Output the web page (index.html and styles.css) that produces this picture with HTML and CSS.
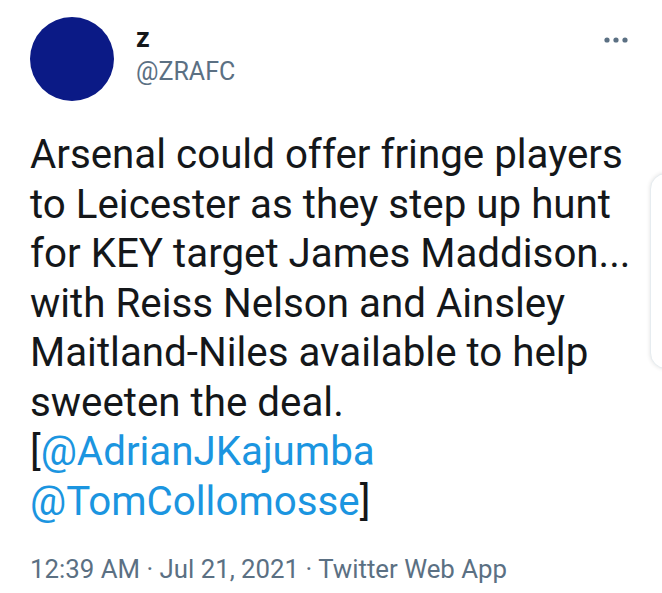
FILE: index.html
```html
<!DOCTYPE html>
<html lang="en">
<head>
    <meta charset="UTF-8">
    <meta name="viewport" content="width=device-width, initial-scale=1.0">
    <title>z on Twitter</title>
    <link rel="stylesheet" href="styles.css">
</head>
<body>

    <div class="tweet">
        <div class="tweet-head">
            <div class="avatar"></div>
            <div class="author">
                <div class="name">z</div>
                <div class="handle">@ZRAFC</div>
            </div>
            <svg class="more" width="24" height="6" viewBox="0 0 24 6">
                <circle cx="3" cy="3" r="2.6" />
                <circle cx="12" cy="3" r="2.6" />
                <circle cx="21" cy="3" r="2.6" />
            </svg>
        </div>

        <p class="tweet-text">Arsenal could offer fringe players to Leicester as they step up hunt for KEY target James Maddison... with Reiss Nelson and Ainsley Maitland-Niles available to help sweeten the deal. [<a href="#">@AdrianJKajumba</a> <a href="#">@TomCollomosse</a>]</p>

        <div class="meta">12:39 AM · Jul 21, 2021 · Twitter Web App</div>
    </div>

    <!-- edge of the next card peeking in -->
    <div class="side-card"></div>

</body>
</html>
```

FILE: styles.css
```css
body {
    margin: 0;
    background-color: #ffffff;
    font-family: Roboto, "Noto Sans", sans-serif;
    color: #14171a;
    overflow: hidden;
}

.tweet {
    padding: 17px 20px 0 30px;
}

.tweet-head {
    display: flex;
    align-items: flex-start;
}

.avatar {
    width: 84px;
    height: 84px;
    border-radius: 50%;
    background-color: #0b1a86;
    flex-shrink: 0;
}

.author {
    margin-left: 22px;
    padding-top: 4px;
    line-height: 34px;
}

.name {
    font-size: 27px;
    font-weight: bold;
}

.handle {
    font-size: 25px;
    color: #5b7083;
}

.more {
    margin-left: auto;
    margin-right: 14px;
    margin-top: 20px;
    fill: #5b7083;
}

.tweet-text {
    margin: 29px 0 0 0;
    font-size: 40.3px;
    line-height: 49.5px;
}

.tweet-text a {
    color: #1b95e0;
    text-decoration: none;
}

.meta {
    margin-top: 28px;
    font-size: 25.8px;
    line-height: 30px;
    color: #5b7083;
}

.side-card {
    position: absolute;
    left: 650px;
    top: 173px;
    width: 40px;
    height: 194px;
    border: 1px solid #e6ecf0;
    border-radius: 16px;
    box-shadow: 0 0 4px rgba(0, 0, 0, 0.12);
    background-color: #ffffff;
}
```
